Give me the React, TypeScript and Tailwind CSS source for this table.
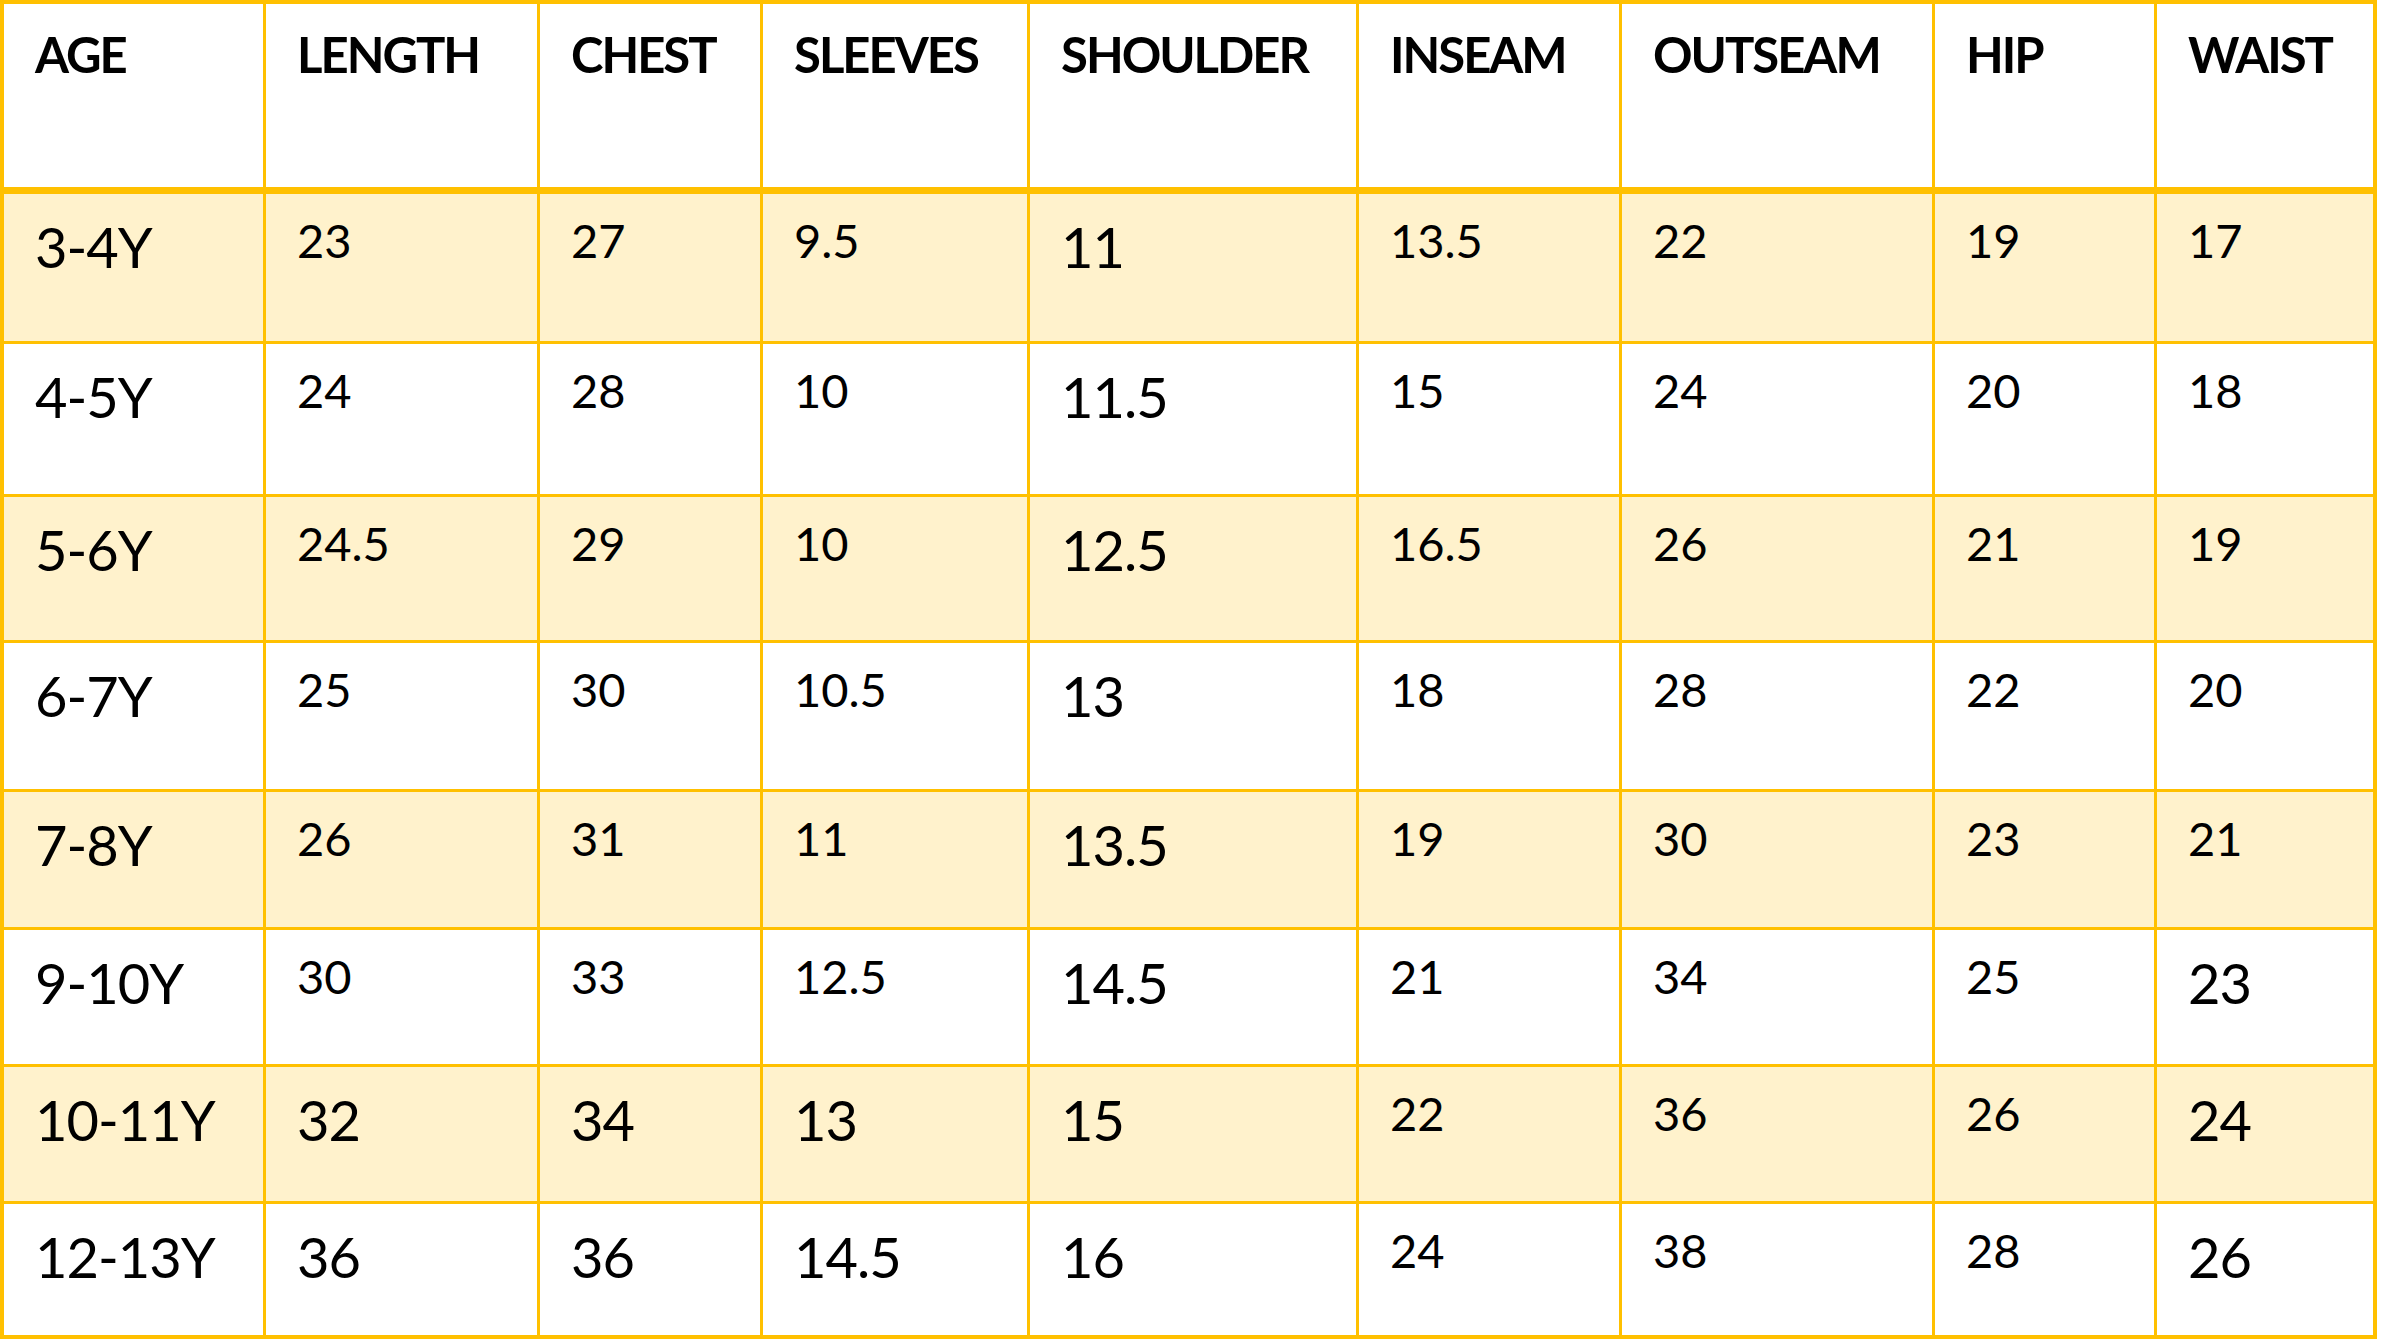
const columns = [
  { label: "AGE", w: "w-[262px]" },
  { label: "LENGTH", w: "w-[274px]" },
  { label: "CHEST", w: "w-[223px]" },
  { label: "SLEEVES", w: "w-[267px]" },
  { label: "SHOULDER", w: "w-[329px]" },
  { label: "INSEAM", w: "w-[263px]" },
  { label: "OUTSEAM", w: "w-[313px]" },
  { label: "HIP", w: "w-[222px]" },
  { label: "WAIST", w: "flex-1" },
];

// value, large?  (true = large text)
type Cell = [string, boolean];

const rows: { h: string; shaded: boolean; cells: Cell[] }[] = [
  {
    h: "h-[150px]",
    shaded: true,
    cells: [["3-4Y", true], ["23", false], ["27", false], ["9.5", false], ["11", true], ["13.5", false], ["22", false], ["19", false], ["17", false]],
  },
  {
    h: "h-[153px]",
    shaded: false,
    cells: [["4-5Y", true], ["24", false], ["28", false], ["10", false], ["11.5", true], ["15", false], ["24", false], ["20", false], ["18", false]],
  },
  {
    h: "h-[146px]",
    shaded: true,
    cells: [["5-6Y", true], ["24.5", false], ["29", false], ["10", false], ["12.5", true], ["16.5", false], ["26", false], ["21", false], ["19", false]],
  },
  {
    h: "h-[149px]",
    shaded: false,
    cells: [["6-7Y", true], ["25", false], ["30", false], ["10.5", false], ["13", true], ["18", false], ["28", false], ["22", false], ["20", false]],
  },
  {
    h: "h-[138px]",
    shaded: true,
    cells: [["7-8Y", true], ["26", false], ["31", false], ["11", false], ["13.5", true], ["19", false], ["30", false], ["23", false], ["21", false]],
  },
  {
    h: "h-[137px]",
    shaded: false,
    cells: [["9-10Y", true], ["30", false], ["33", false], ["12.5", false], ["14.5", true], ["21", false], ["34", false], ["25", false], ["23", true]],
  },
  {
    h: "h-[137px]",
    shaded: true,
    cells: [["10-11Y", true], ["32", true], ["34", true], ["13", true], ["15", true], ["22", false], ["36", false], ["26", false], ["24", true]],
  },
  {
    h: "h-[131px]",
    shaded: false,
    cells: [["12-13Y", true], ["36", true], ["36", true], ["14.5", true], ["16", true], ["24", false], ["38", false], ["28", false], ["26", true]],
  },
];

export default function App() {
  return (
    <div className="min-h-screen w-full bg-white font-['Lato',sans-serif] text-black">
      <div className="flex w-[2377px] flex-col border-[4px] border-[#FFC000]">
        <div className="flex h-[190px] border-b-[7px] border-[#FFC000]">
          {columns.map((c, i) => (
            <div
              key={c.label}
              className={`${c.w} ${i < columns.length - 1 ? "border-r-[3px]" : ""} border-[#FFC000] pl-[31px] pt-[26px] text-[49px] font-bold leading-none tracking-[-2px]`}
            >
              {c.label}
            </div>
          ))}
        </div>
        {rows.map((r, ri) => (
          <div
            key={ri}
            className={`flex ${r.h} ${ri < rows.length - 1 ? "border-b-[3px]" : ""} border-[#FFC000] ${r.shaded ? "bg-[#FFF2CC]" : "bg-white"}`}
          >
            {r.cells.map(([v, large], ci) => (
              <div
                key={ci}
                className={`${columns[ci].w} ${ci < columns.length - 1 ? "border-r-[3px]" : ""} border-[#FFC000] pl-[31px] leading-none ${
                  large ? "pt-[25px] text-[56px] tracking-[-1px]" : "pt-[23px] text-[47px]"
                }`}
              >
                {v}
              </div>
            ))}
          </div>
        ))}
      </div>
    </div>
  );
}
